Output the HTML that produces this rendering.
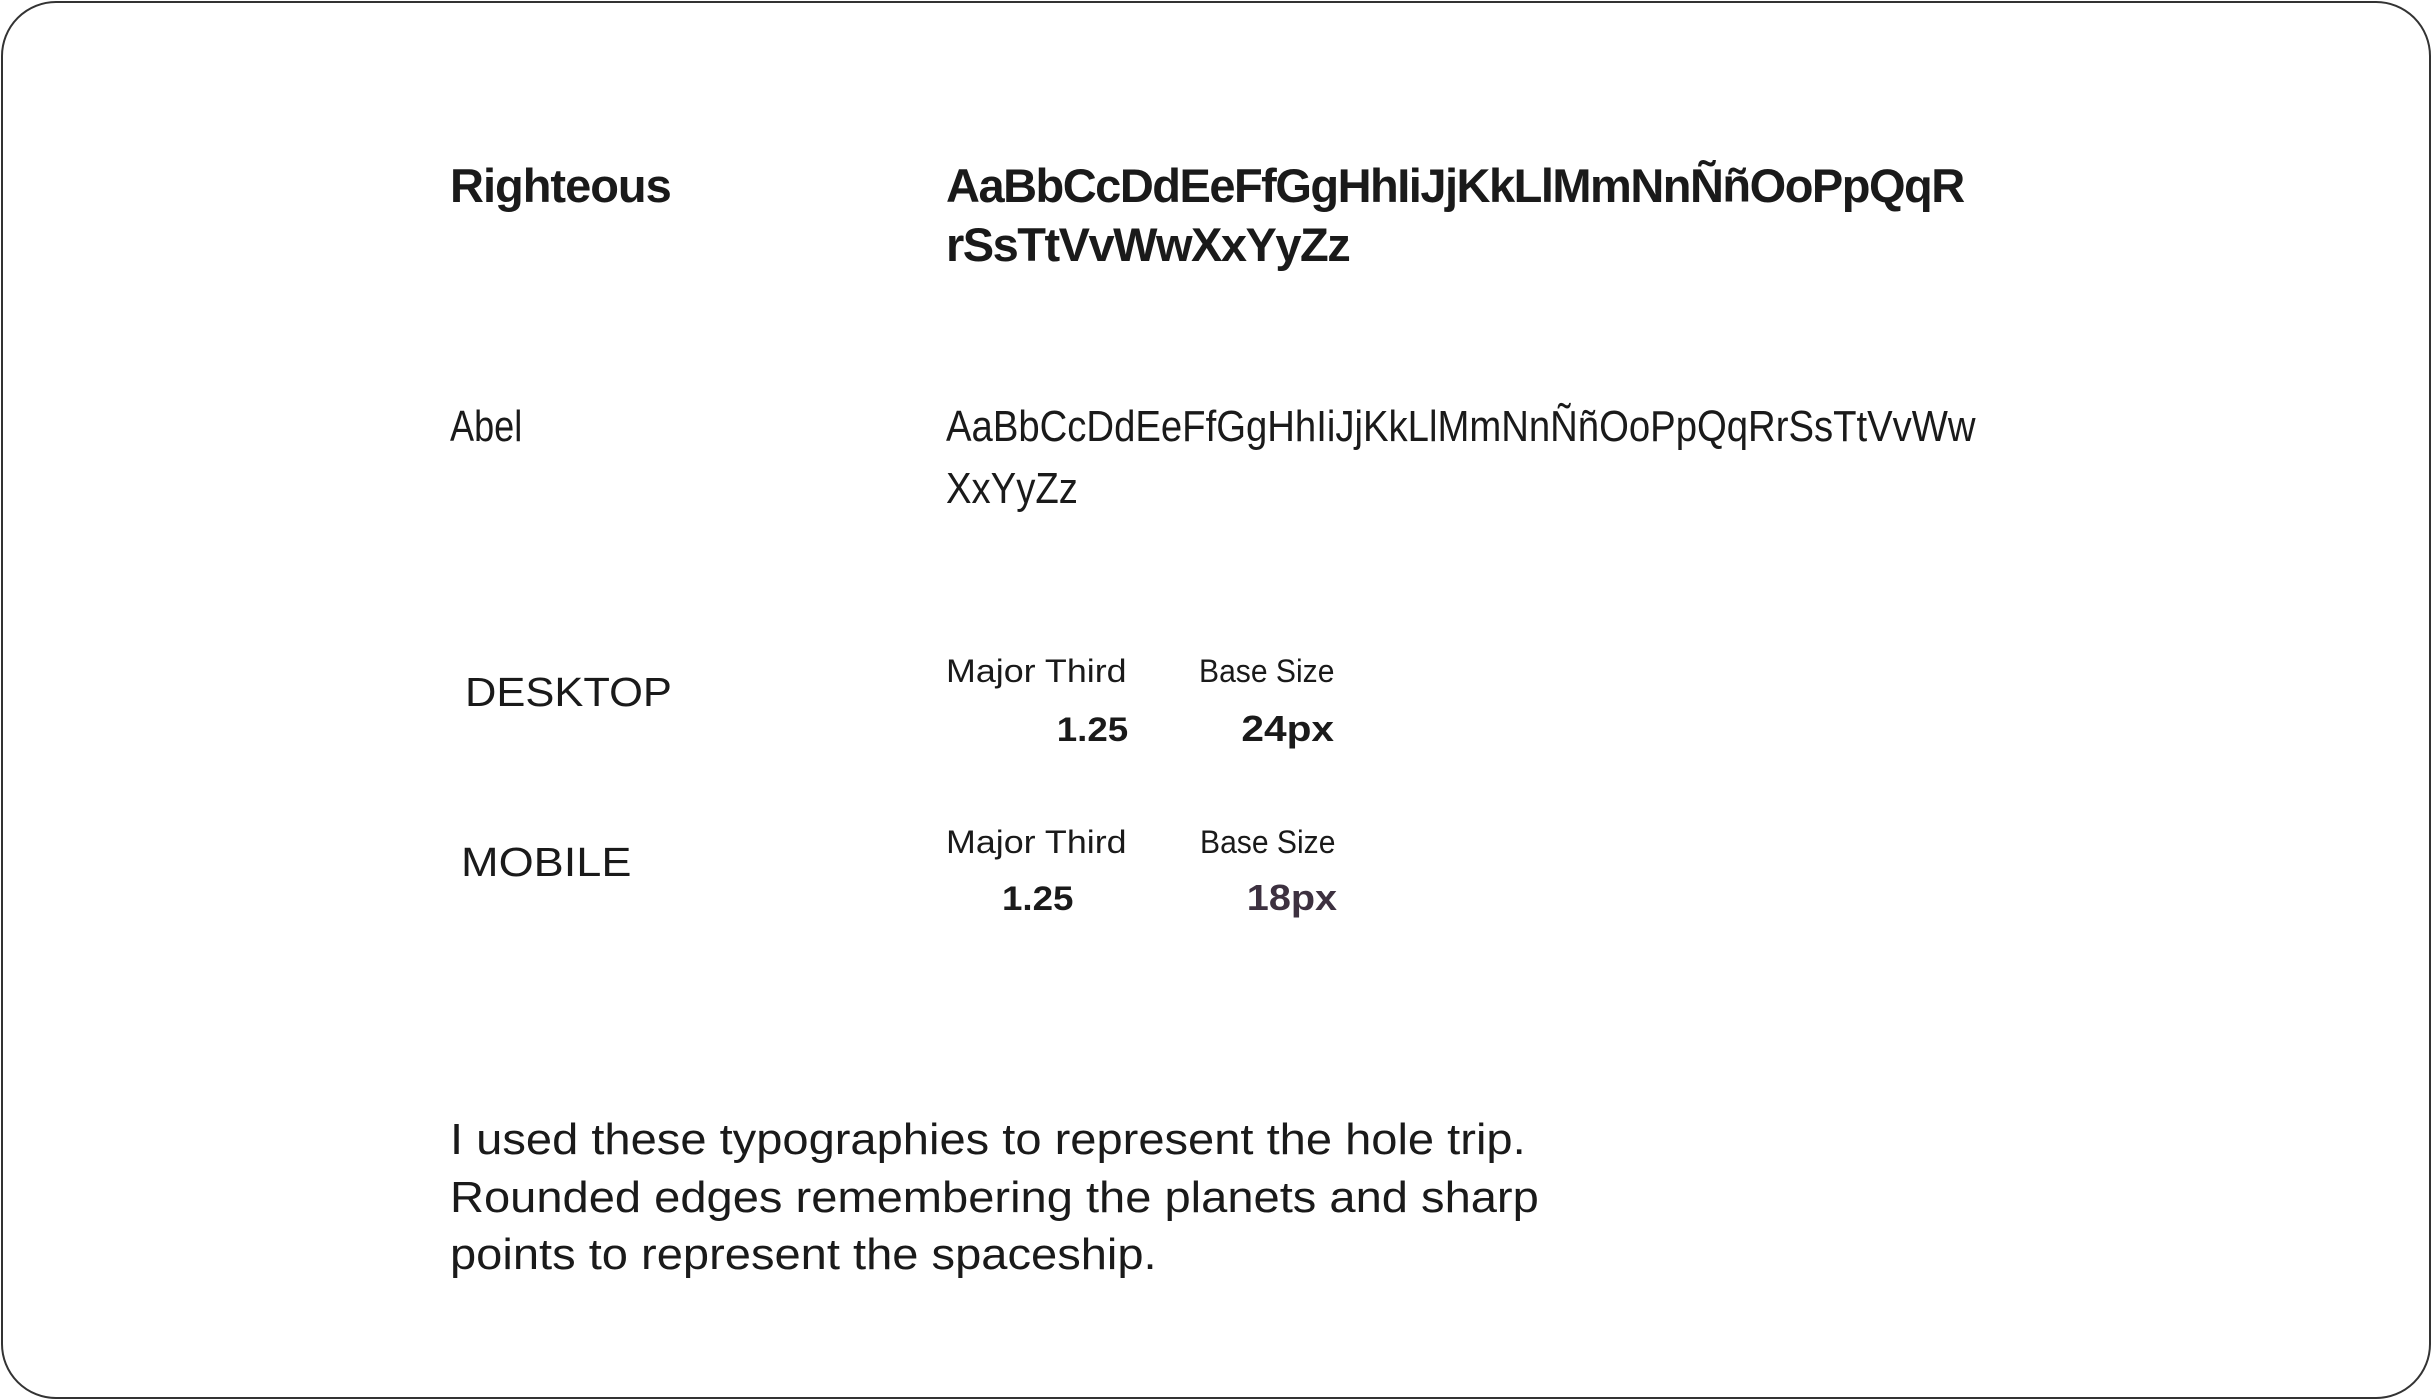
<!DOCTYPE html>
<html><head><meta charset="utf-8"><style>
html,body{margin:0;padding:0;background:#fff;}
body{width:2432px;height:1400px;position:relative;overflow:hidden;font-family:"Liberation Sans",sans-serif;color:#1a1a1a;}
.frame{position:absolute;left:1px;top:1px;width:2426px;height:1394px;border:2px solid #333;border-radius:55px;}
.t{position:absolute;white-space:nowrap;line-height:1;}
.sx{display:inline-block;transform-origin:0 0;}
.sr{display:inline-block;transform-origin:100% 0;}
.r{text-align:right;}
</style></head><body>
<div class="frame"></div>

<div class="t" style="left:450px;top:162px;font-size:47px;font-weight:bold;letter-spacing:-1px;">Righteous</div>
<div class="t" style="left:946px;top:162px;font-size:47px;font-weight:bold;"><span class="sx" style="transform:scaleX(1.0);letter-spacing:-1.5px">AaBbCcDdEeFfGgHhIiJjKkLlMmNnÑñOoPpQqR</span></div>
<div class="t" style="left:946px;top:221px;font-size:47px;font-weight:bold;"><span class="sx" style="transform:scaleX(1.0);letter-spacing:-1.5px">rSsTtVvWwXxYyZz</span></div>

<div class="t" style="left:450px;top:405px;font-size:44px;"><span class="sx" style="transform:scaleX(.82)">Abel</span></div>
<div class="t" style="left:946px;top:405px;font-size:44px;"><span class="sx" style="transform:scaleX(.87)">AaBbCcDdEeFfGgHhIiJjKkLlMmNnÑñOoPpQqRrSsTtVvWw</span></div>
<div class="t" style="left:946px;top:467px;font-size:44px;"><span class="sx" style="transform:scaleX(.87)">XxYyZz</span></div>

<div class="t" style="left:465px;top:672px;font-size:41px;"><span class="sx" style="transform:scaleX(1.06)">DESKTOP</span></div>
<div class="t" style="left:946px;top:655px;font-size:32px;"><span class="sx" style="transform:scaleX(1.12)">Major Third</span></div>
<div class="t" style="left:1199px;top:655px;font-size:32px;"><span class="sx" style="transform:scaleX(.94)">Base Size</span></div>
<div class="t r" style="left:1000px;width:128px;top:713px;font-size:34px;font-weight:bold;"><span class="sr" style="transform:scaleX(1.08)">1.25</span></div>
<div class="t r" style="left:1150px;width:184px;top:711px;font-size:36px;font-weight:bold;"><span class="sr" style="transform:scaleX(1.13)">24px</span></div>

<div class="t" style="left:461px;top:842px;font-size:41px;"><span class="sx" style="transform:scaleX(1.1)">MOBILE</span></div>
<div class="t" style="left:946px;top:826px;font-size:32px;"><span class="sx" style="transform:scaleX(1.12)">Major Third</span></div>
<div class="t" style="left:1200px;top:826px;font-size:32px;"><span class="sx" style="transform:scaleX(.94)">Base Size</span></div>
<div class="t" style="left:1002px;top:882px;font-size:34px;font-weight:bold;"><span class="sx" style="transform:scaleX(1.08)">1.25</span></div>
<div class="t r" style="left:1150px;width:187px;top:880px;font-size:36px;font-weight:bold;color:#3d3140;"><span class="sr" style="transform:scaleX(1.1)">18px</span></div>

<div class="t" style="left:450px;top:1118px;font-size:44px;"><span class="sx" style="transform:scaleX(1.07)">I used these typographies to represent the hole trip.</span></div>
<div class="t" style="left:450px;top:1176px;font-size:44px;"><span class="sx" style="transform:scaleX(1.07)">Rounded edges remembering the planets and sharp</span></div>
<div class="t" style="left:450px;top:1233px;font-size:44px;"><span class="sx" style="transform:scaleX(1.07)">points to represent the spaceship.</span></div>
</body></html>
